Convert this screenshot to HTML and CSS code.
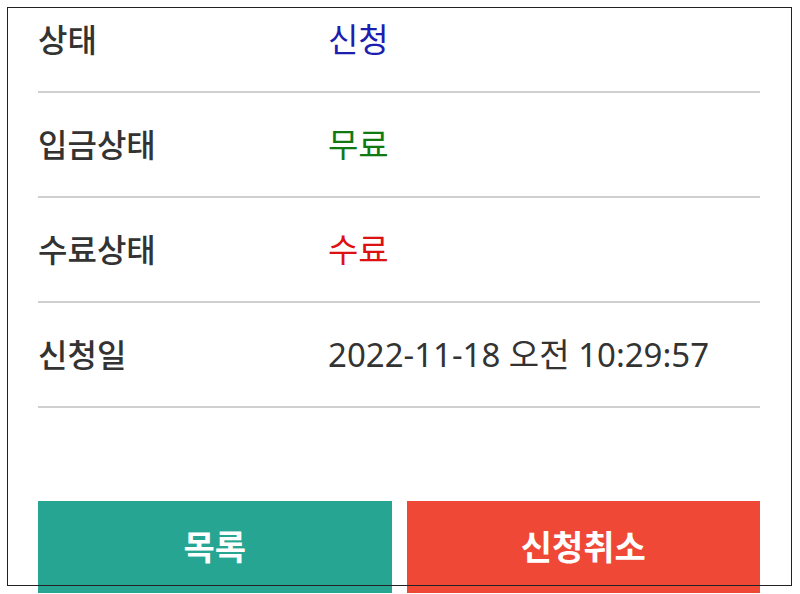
FILE: index.html
```html
<!DOCTYPE html>
<html lang="ko">
<head>
<meta charset="utf-8">
<link rel="stylesheet" href="styles.css">
</head>
<body>
<div class="page">
  <div class="info">
    <div class="row"><div class="label">상태</div><div class="value v-blue">신청</div></div>
    <div class="row"><div class="label">입금상태</div><div class="value v-green">무료</div></div>
    <div class="row"><div class="label">수료상태</div><div class="value v-red">수료</div></div>
    <div class="row"><div class="label">신청일</div><div class="value">2022-11-18 오전 10:29:57</div></div>
  </div>
  <div class="actions">
    <a class="btn btn-list">목록</a>
    <a class="btn btn-cancel">신청취소</a>
  </div>
</div>
<div class="frame"></div>
</body>
</html>
```
FILE: styles.css
```css
html, body {
  margin: 0;
  padding: 0;
  background: #fff;
  overflow: hidden;
}
body {
  font-family: "Noto Sans", "Noto Sans CJK KR", sans-serif;
  color: #333;
}
.page {
  padding: 0 40px 0 38px;
  margin-top: -12px;
}
.row {
  display: flex;
  align-items: center;
  height: 103px;
  border-bottom: 2px solid #d0d0d0;
}
.label {
  width: 290px;
  font-size: 32px;
  font-weight: 500;
  color: #333;
  line-height: 1;
}
.value {
  font-size: 33px;
  font-weight: 400;
  color: #333;
  line-height: 1;
}
.v-blue { color: #1d1db0; }
.v-green { color: #107a10; }
.v-red { color: #dd1111; }
.actions {
  display: flex;
  gap: 15px;
  margin-top: 93px;
}
.btn {
  flex: 1;
  height: 92px;
  display: flex;
  align-items: center;
  justify-content: center;
  color: #fff;
  font-size: 34px;
  font-weight: 700;
  line-height: 1;
}
.btn-list { background: #26a592; }
.btn-cancel { background: #ef4836; }
.frame {
  position: absolute;
  left: 7px;
  top: 7px;
  width: 783px;
  height: 577px;
  border: 1px solid #222;
  pointer-events: none;
}
```
